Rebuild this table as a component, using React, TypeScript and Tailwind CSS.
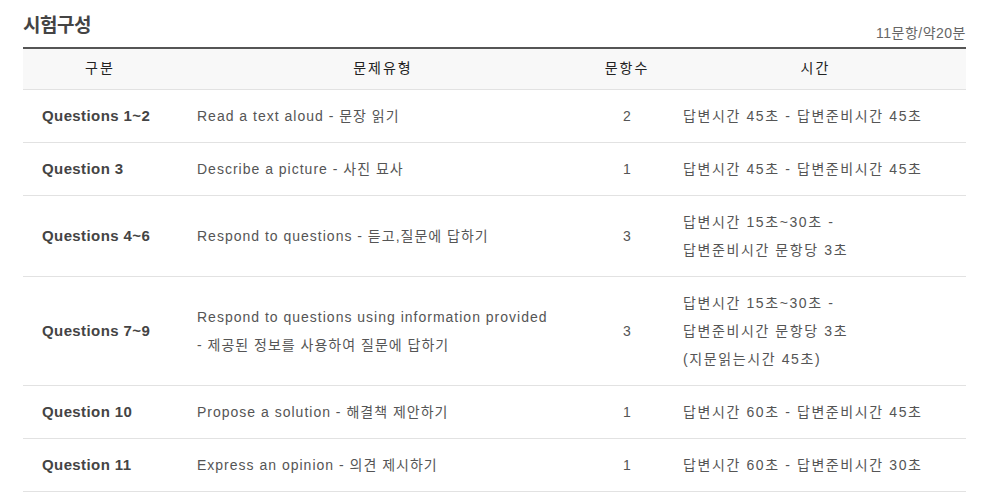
const rows = [
  { label: "Questions 1~2", type: ["Read a text aloud - 문장 읽기"], count: "2", time: ["답변시간 45초 - 답변준비시간 45초"] },
  { label: "Question 3", type: ["Describe a picture - 사진 묘사"], count: "1", time: ["답변시간 45초 - 답변준비시간 45초"] },
  { label: "Questions 4~6", type: ["Respond to questions - 듣고,질문에 답하기"], count: "3", time: ["답변시간 15초~30초 -", "답변준비시간 문항당 3초"] },
  {
    label: "Questions 7~9",
    type: ["Respond to questions using information provided", "- 제공된 정보를 사용하여 질문에 답하기"],
    count: "3",
    time: ["답변시간 15초~30초 -", "답변준비시간 문항당 3초", "(지문읽는시간 45초)"],
  },
  { label: "Question 10", type: ["Propose a solution - 해결책 제안하기"], count: "1", time: ["답변시간 60초 - 답변준비시간 45초"] },
  { label: "Question 11", type: ["Express an opinion - 의견 제시하기"], count: "1", time: ["답변시간 60초 - 답변준비시간 30초"] },
];

export default function App() {
  return (
    <div className="bg-white w-[1007px] h-[504px] pl-[23px] pr-[41px] pt-[10px] font-['Liberation_Sans','Noto_Sans_CJK_KR',sans-serif] text-[#555]">
      {/* 제목 영역 */}
      <div className="flex items-end justify-between h-[37px]">
        <h2 className="text-[19px] leading-[26px] font-bold text-[#444] tracking-[-0.5px] mb-[8px]">시험구성</h2>
        <span className="text-[14px] leading-[18px] text-[#666] mb-[5px] tracking-[0.5px]">11문항/약20분</span>
      </div>

      <table className="w-[943px] table-fixed border-collapse border-t-2 border-[#555] text-[14px]">
        <colgroup>
          <col className="w-[154px]" />
          <col className="w-[412px]" />
          <col className="w-[76px]" />
          <col className="w-[301px]" />
        </colgroup>
        <thead>
          <tr className="bg-[#f8f8f8] border-b border-[#e2e2e2] h-[41px]">
            <th className="font-normal text-[#222] text-center tracking-[2px]">구분</th>
            <th className="font-normal text-[#222] text-center tracking-[2px]">문제유형</th>
            <th className="font-normal text-[#222] text-center tracking-[2px]">문항수</th>
            <th className="font-normal text-[#222] text-center tracking-[2px]">시간</th>
          </tr>
        </thead>
        <tbody>
          {rows.map((r) => (
            <tr key={r.label} className="border-b border-[#e2e2e2]">
              <td className="pl-[19px] py-[12px] leading-[28px] font-bold text-[15px] tracking-[0.4px] text-[#444]">{r.label}</td>
              <td className="pl-[20px] py-[12px] leading-[28px] tracking-[1px]">
                {r.type.map((t) => (
                  <div key={t}>{t}</div>
                ))}
              </td>
              <td className="text-center py-[12px] leading-[28px]">{r.count}</td>
              <td className="pl-[18px] py-[12px] leading-[28px] tracking-[1.6px]">
                {r.time.map((t) => (
                  <div key={t}>{t}</div>
                ))}
              </td>
            </tr>
          ))}
        </tbody>
      </table>
    </div>
  );
}
